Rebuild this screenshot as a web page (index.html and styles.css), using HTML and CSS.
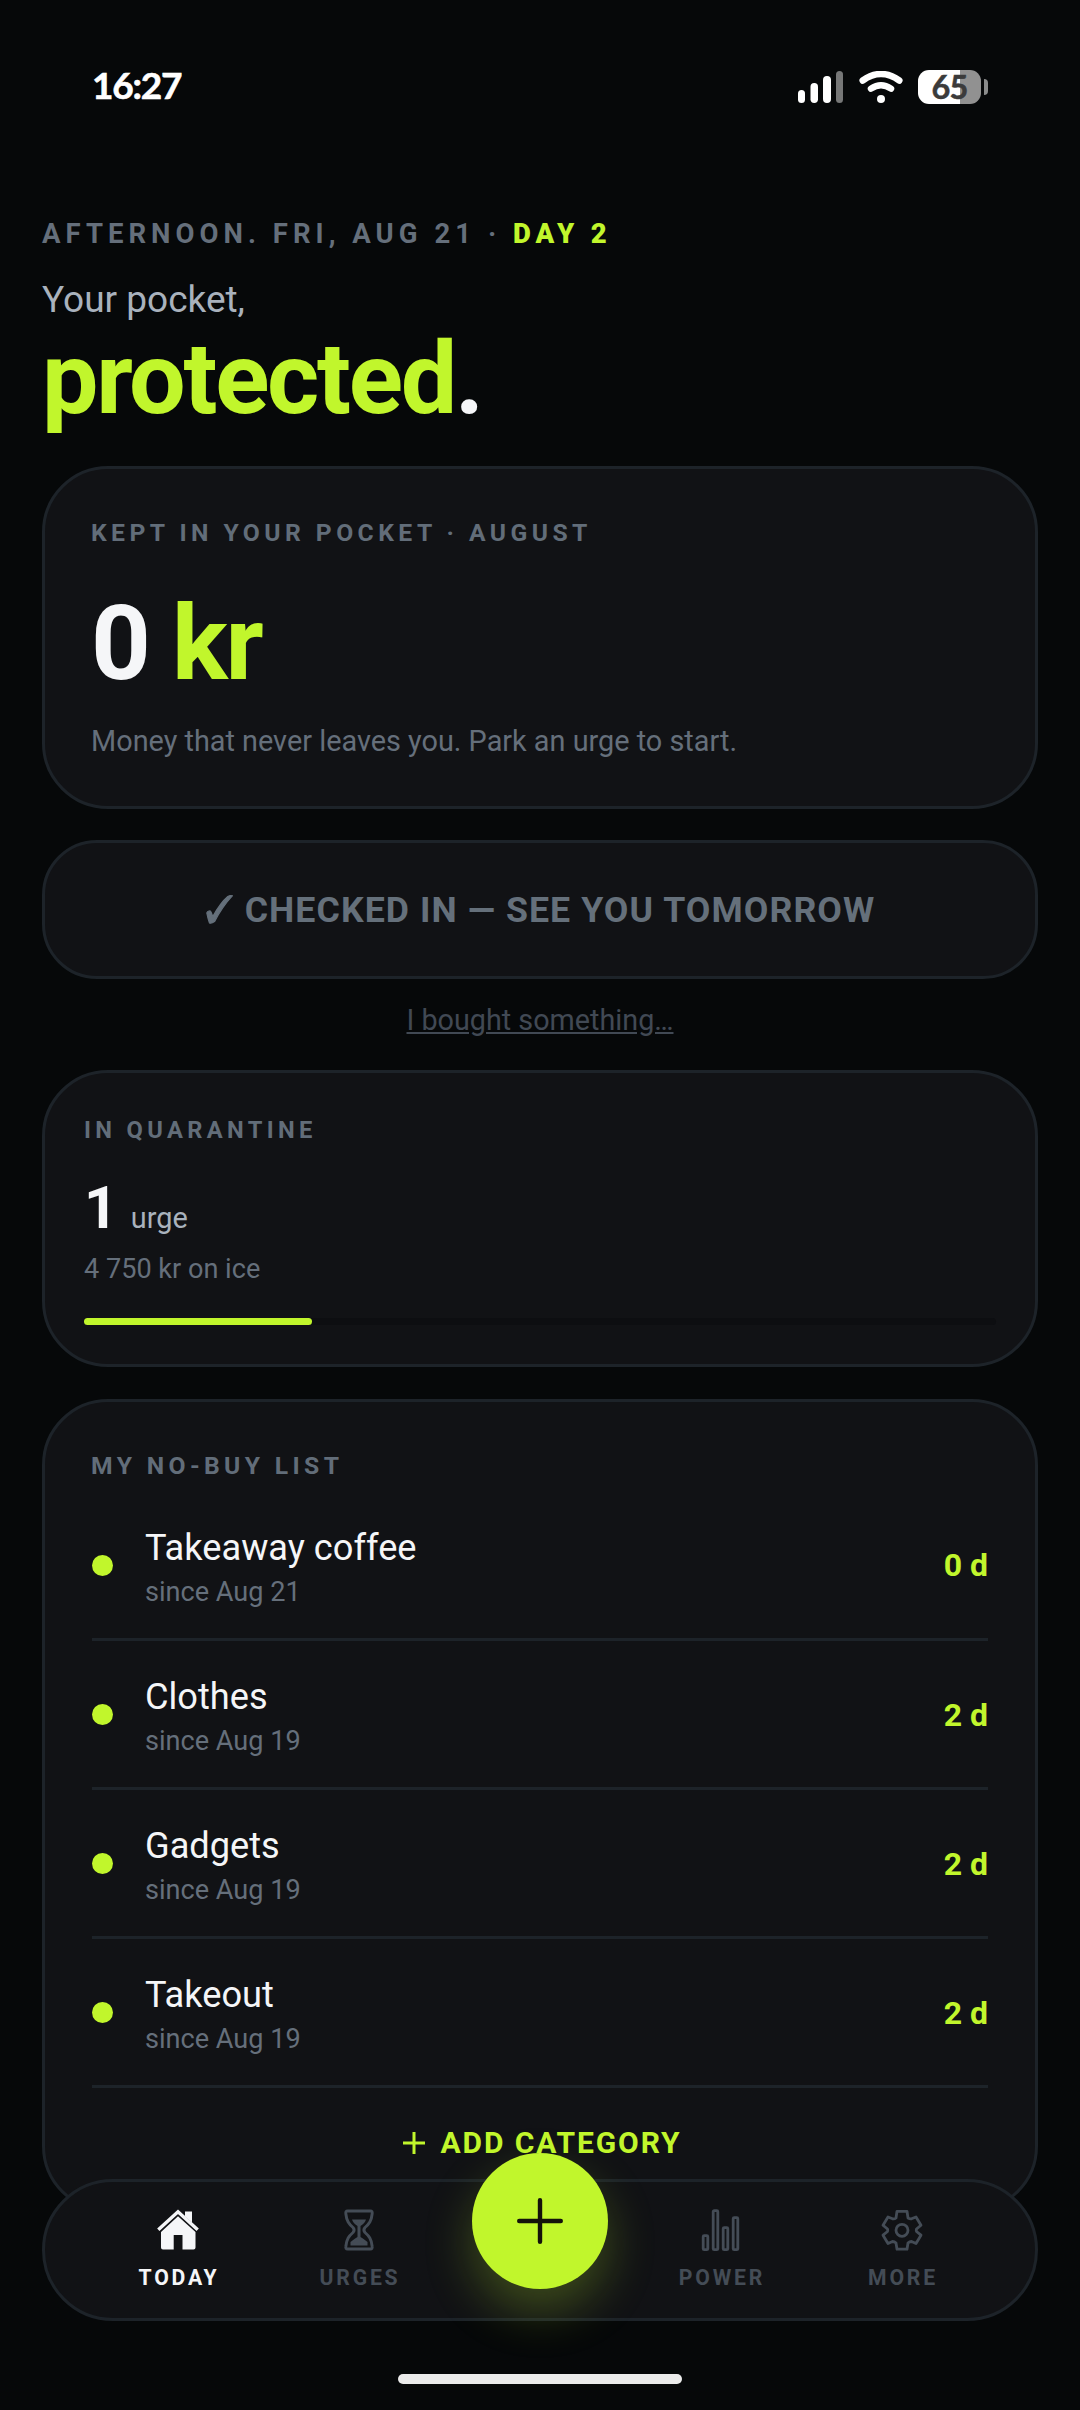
FILE: index.html
```html
<!DOCTYPE html>
<html lang="en">
<head>
<meta charset="utf-8">
<title>Today</title>
<link rel="stylesheet" href="styles.css">
</head>
<body>
<div class="screen">
  <header class="status">
    <span class="clock">16:27</span>
    <div class="status-icons">
      <svg class="signal" width="45" height="33" viewBox="0 0 45 33"><g fill="#fff"><rect x="0" y="19" width="7" height="13" rx="3.5"/><rect x="12.5" y="12" width="7.500" height="20" rx="3.700"/><rect x="25" y="5" width="8" height="27" rx="3.900"/><rect x="38" y="0" width="7" height="32" rx="3.500" opacity=".45"/></g></svg>
      <svg class="wifi" width="44" height="33" viewBox="0 0 44 33"><g fill="none" stroke="#fff" stroke-width="6.500" stroke-linecap="round"><path d="M3.700 9.500Q22 -3.500 40.300 9.500"/><path d="M12 17.600Q22 11 32 17.600"/></g><circle cx="22" cy="28" r="4" fill="#fff"/></svg>
      <div class="battery"><span class="battery-level">65</span><span class="battery-cap"></span></div>
    </div>
  </header>

  <main class="content">
    <p class="eyebrow">AFTERNOON. FRI, AUG 21 · <b class="accent">DAY 2</b></p>
    <p class="intro">Your pocket,</p>
    <h1 class="headline"><span class="accent">protected</span>.</h1>

    <section class="card kept">
      <h2 class="label">KEPT IN YOUR POCKET · AUGUST</h2>
      <p class="amount">0 <span class="accent">kr</span></p>
      <p class="note">Money that never leaves you. Park an urge to start.</p>
    </section>

    <button class="card checkin"><svg class="tick" width="27" height="29" viewBox="0 0 27 29"><path d="M.8 18C1.500 16 4.500 15 5 17L6.800 21.500C11 14 17 5.500 21.800 1.500Q24 .2 26.300 .8C20 7.500 13.500 17 8.500 26.600Q5.500 28.800 3.500 28C2.300 25 1.500 21.500 .8 18Z" fill="currentColor" stroke="currentColor" stroke-width="1.200"/></svg><span>CHECKED IN — SEE YOU TOMORROW</span></button>
    <a class="bought">I bought something…</a>

    <section class="card quarantine">
      <h2 class="label">IN QUARANTINE</h2>
      <p class="count"><b>1</b><span>urge</span></p>
      <p class="ice">4 750 kr on ice</p>
      <div class="track"><div class="fill"></div></div>
    </section>

    <section class="card list">
      <h2 class="label">MY NO-BUY LIST</h2>
      <div class="row"><i class="dot"></i><div class="item"><p class="name">Takeaway coffee</p><p class="since">since Aug 21</p></div><b class="days">0 d</b></div>
      <div class="row"><i class="dot"></i><div class="item"><p class="name">Clothes</p><p class="since">since Aug 19</p></div><b class="days">2 d</b></div>
      <div class="row"><i class="dot"></i><div class="item"><p class="name">Gadgets</p><p class="since">since Aug 19</p></div><b class="days">2 d</b></div>
      <div class="row"><i class="dot"></i><div class="item"><p class="name">Takeout</p><p class="since">since Aug 19</p></div><b class="days">2 d</b></div>
      <div class="add"><svg width="22" height="22" viewBox="0 0 22 22"><path d="M11 0V22M0 11H22" stroke="currentColor" stroke-width="3"/></svg><span>ADD CATEGORY</span></div>
    </section>
  </main>

  <nav class="tabbar">
    <div class="tab active">
      <svg width="44" height="44" viewBox="0 0 44 44"><path d="M2.300 21.800L22 3.800L41.700 21.800" fill="none" stroke="currentColor" stroke-width="3.400"/><path d="M29 3.500h7v11l-7-6zM22 8.300L39.500 24V39.500Q39.500 41.500 37.500 41.500H26.500V27H17.700V41.500H7Q5 41.500 5 39.500V24Z" fill="currentColor"/></svg>
      <span>TODAY</span>
    </div>
    <div class="tab">
      <svg width="44" height="44" viewBox="0 0 44 44"><path d="M10.500 3H33.500Q35.500 3 35.200 5.500C34.500 13 32 16 28 19.500Q25.800 22 28 24.500C32 28 34.500 31 35.200 38.500Q35.500 41 33.500 41H10.500Q8.500 41 8.800 38.500C9.500 31 12 28 16 24.500Q18.200 22 16 19.500C12 16 9.500 13 8.800 5.500Q8.500 3 10.500 3Z" fill="none" stroke="currentColor" stroke-width="2.900"/><path d="M15 11.500H29Q28 15 23.500 18V29Q27 31 30.500 34V37.500H13.500V34Q17 31 20.500 29V18Q16 15 15 11.500Z" fill="currentColor"/></svg>
      <span>URGES</span>
    </div>
    <div class="tab-space"></div>
    <div class="tab">
      <svg width="44" height="44" viewBox="0 0 44 44"><g fill="none" stroke="currentColor" stroke-width="2.800"><rect x="4.200" y="27.700" width="4.600" height="14" rx="1"/><rect x="14.200" y="2.700" width="4.600" height="39" rx="1"/><rect x="24.200" y="19.700" width="4.600" height="22" rx="1"/><rect x="34.200" y="9.700" width="4.600" height="32" rx="1"/></g></svg>
      <span>POWER</span>
    </div>
    <div class="tab">
      <svg width="44" height="44" viewBox="0 0 44 44"><g fill="none" stroke="currentColor" stroke-width="2.800" stroke-linejoin="round"><path d="M17 3.300H27L28 10Q30 11.200 31.500 10.800L36 9L41 17.200L36.500 21Q36 22.300 36.500 23.500L41 27.200L36 35.500L31.500 33.500Q29.500 33.500 28 35L27 41.200H17L16 35Q14.500 33.500 12.500 33.500L8 35.500L3 27.200L7.500 23.500Q8 22.300 7.500 21L3 17.200L8 9L12.500 10.800Q14.500 11.200 16 10Z"/><circle cx="22" cy="22.300" r="6"/></g></svg>
      <span>MORE</span>
    </div>
    <button class="fab"><svg width="46" height="46" viewBox="0 0 46 46"><path d="M23 2.200V43.800M2.200 23H43.800" stroke="#14120a" stroke-width="4.400" stroke-linecap="round"/></svg></button>
  </nav>
  <div class="home-indicator"></div>
</div>
</body>
</html>
```
FILE: styles.css
```css
* { box-sizing: border-box; margin: 0; padding: 0; }
body { background: #060809; }
.screen {
  position: relative;
  width: 1080px;
  height: 2410px;
  overflow: hidden;
  background: #060809;
  color: #f5f6f8;
  font-family: Roboto, "Liberation Sans", sans-serif;
}
.accent { color: #c1f62c; }

.status {
  display: flex;
  justify-content: space-between;
  height: 216px;
  padding: 64px 92px 0 92px;
}
.clock { font: 700 37px/42px Lato, Roboto, sans-serif; letter-spacing: -1.200px; color: #fff; -webkit-text-stroke: .6px #fff; }
.status-icons { display: flex; padding-top: 6px; }
.signal { margin-top: 1px; }
.wifi { margin: 1px 0 0 16px; }
.battery { display: flex; align-items: center; margin-left: 15px; gap: 3px; height: 34px; }
.battery-level {
  width: 63px;
  height: 34px;
  border-radius: 11px;
  background: linear-gradient(90deg, #fff 42px, #919191 42px);
  color: #3b3b3b;
  font: 700 32.500px/33px Lato, Roboto, sans-serif;
  letter-spacing: -.8px;
  -webkit-text-stroke: .5px #3b3b3b;
  text-align: center;
}
.battery-cap { width: 4px; height: 16px; border-radius: 0 4px 4px 0; background: #8b8c8c; }

.content { display: flex; flex-direction: column; padding: 0 42px; }
.eyebrow { font-size: 27.5px; line-height: 36px; font-weight: 700; letter-spacing: 5.030px; color: #656f7b; white-space: pre; }
.eyebrow b { letter-spacing: 4.850px; }
.intro { margin-top: 25px; font-size: 37px; line-height: 46px; color: #a9b2bd; }
.headline { margin-top: 1px; font-size: 100.400px; line-height: 110px; font-weight: 700; letter-spacing: -2.300px; }

.card { border: 3px solid #1d2329; border-radius: 66px; background: #111215; }
.label { font-size: 24.700px; line-height: 32px; font-weight: 700; letter-spacing: 4.430px; color: #626d79; }
.kept { height: 343px; margin-top: 32px; padding: 48px 46px 0; }
.amount { margin-top: 39px; font-size: 104.400px; line-height: 110px; font-weight: 700; letter-spacing: -2.400px; }
.note { margin-top: 25px; font-size: 28.850px; line-height: 36px; color: #656f7b; }
.checkin {
  display: flex;
  align-items: center;
  justify-content: center;
  gap: 12px;
  height: 139px;
  margin-top: 31px;
  padding-left: 1px;
  border-radius: 55px;
  font: 700 35.700px/42px Roboto, sans-serif;
  letter-spacing: 1.070px;
  color: #65707b;
}
.bought { align-self: center; margin-top: 22px; font-size: 28.750px; line-height: 38px; color: #414954; text-decoration: underline; }
.quarantine { height: 297px; margin-top: 31px; padding: 41px 39px 0; }
.quarantine .label { font-size: 23.700px; letter-spacing: 4.350px; }
.count { display: flex; align-items: baseline; gap: 13px; margin-top: 29px; line-height: 66px; }
.count b { font-size: 59px; }
.count span { font-size: 28.850px; color: #a9b2bd; }
.ice { margin-top: 1px; font-size: 27.100px; line-height: 34px; color: #656f7b; }
.track { height: 7px; margin-top: 32px; border-radius: 4px; background: #0d0e11; }
.fill { width: 25%; height: 7px; border-radius: 4px; background: #c1f62c; }
.list { height: 813px; margin-top: 32px; padding: 48px 47px 0; }
.list .label { margin-left: -1px; letter-spacing: 4.350px; }
.row { display: flex; align-items: center; height: 149px; border-bottom: 3px solid #1d2329; }
.label + .row { margin-top: 9px; height: 150px; }
.dot { width: 21px; height: 21px; margin-top: 1px; border-radius: 50%; background: #c1f62c; }
.item { flex: 1; margin-left: 32px; padding-top: 5px; }
.name { font-size: 36.200px; line-height: 46px; }
.since { font-size: 27.100px; line-height: 36px; margin-top: 3px; color: #656f7b; }
.days { padding-top: 1px; font-size: 32px; font-weight: 700; color: #c1f62c; }
.add { display: flex; align-items: center; justify-content: center; gap: 15px; margin-top: 36px; padding-left: 5px; font-size: 30px; line-height: 38px; font-weight: 700; letter-spacing: 1.900px; color: #c1f62c; }

.tabbar {
  position: absolute;
  left: 42px;
  top: 2179px;
  display: flex;
  width: 996px;
  height: 142px;
  padding: 26px 43px 0 42px;
  border: 3px solid #1d2329;
  border-radius: 71px;
  background: #111215;
}
.tab, .tab-space { flex: 1; }
.tab { display: flex; flex-direction: column; align-items: center; color: #444c56; font-size: 21.200px; line-height: 28px; font-weight: 700; letter-spacing: 2.800px; }
.tab span { margin: 12px -3px 0 0; }
.active { color: #f5f6f8; }
.fab {
  position: absolute;
  left: 427px;
  top: -29px;
  display: flex;
  align-items: center;
  justify-content: center;
  width: 136px;
  height: 136px;
  border: 0;
  border-radius: 50%;
  background: #c1f62c;
  box-shadow: 0 22px 48px rgba(193, 246, 44, .25);
}
.home-indicator { position: absolute; left: 398px; top: 2374px; width: 284px; height: 10px; border-radius: 5px; background: #ebebeb; }
```
